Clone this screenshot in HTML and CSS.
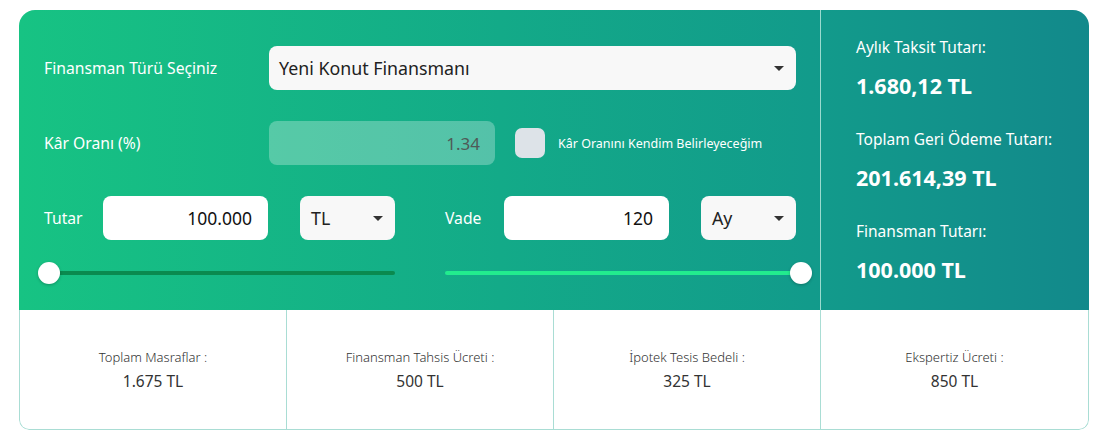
FILE: index.html
```html
<!DOCTYPE html>
<html lang="tr">
<head>
<meta charset="utf-8">
<title>Finansman Hesaplama</title>
<link rel="stylesheet" href="styles.css">
</head>
<body>
<div class="calc">
  <div class="top">
    <div class="form">
      <div class="row">
        <div class="label">Finansman Türü Seçiniz</div>
        <div class="select wide"><span>Yeni Konut Finansmanı</span><i class="caret"></i></div>
      </div>
      <div class="row">
        <div class="label">Kâr Oranı (%)</div>
        <div class="rate">1.34</div>
        <div class="check"></div>
        <div class="check-label">Kâr Oranını Kendim Belirleyeceğim</div>
      </div>
      <div class="pair">
        <div class="half">
          <div class="field">
            <div class="short-label">Tutar</div>
            <div class="input">100.000</div>
            <div class="select small"><span>TL</span><i class="caret"></i></div>
          </div>
          <div class="slider slider-left">
            <div class="track dark"></div>
            <div class="thumb thumb-left"></div>
          </div>
        </div>
        <div class="half">
          <div class="field">
            <div class="short-label">Vade</div>
            <div class="input">120</div>
            <div class="select small"><span>Ay</span><i class="caret"></i></div>
          </div>
          <div class="slider slider-right">
            <div class="track bright"></div>
            <div class="thumb thumb-right"></div>
          </div>
        </div>
      </div>
    </div>
    <div class="summary">
      <div class="sum-item">
        <div class="sum-label">Aylık Taksit Tutarı:</div>
        <div class="sum-value">1.680,12 TL</div>
      </div>
      <div class="sum-item">
        <div class="sum-label">Toplam Geri Ödeme Tutarı:</div>
        <div class="sum-value">201.614,39 TL</div>
      </div>
      <div class="sum-item">
        <div class="sum-label">Finansman Tutarı:</div>
        <div class="sum-value">100.000 TL</div>
      </div>
    </div>
  </div>
  <div class="costs">
    <div class="cost"><div class="cost-label">Toplam Masraflar :</div><div class="cost-value">1.675 TL</div></div>
    <div class="cost"><div class="cost-label">Finansman Tahsis Ücreti :</div><div class="cost-value">500 TL</div></div>
    <div class="cost"><div class="cost-label">İpotek Tesis Bedeli :</div><div class="cost-value">325 TL</div></div>
    <div class="cost"><div class="cost-label">Ekspertiz Ücreti :</div><div class="cost-value">850 TL</div></div>
  </div>
</div>
</body>
</html>
```
FILE: styles.css
```css
* { box-sizing: border-box; }
body {
  margin: 0;
  background: #fff;
  font-family: "Noto Sans", Roboto, Arial, sans-serif;
}
.calc {
  margin: 10px 0 0 19px;
  width: 1070px;
  border-radius: 16px 16px 10px 10px;
  overflow: hidden;
}
.top {
  display: grid;
  grid-template-columns: 801px 269px;
  height: 300px;
  background: linear-gradient(90deg, #17c383 0%, #13aa88 45%, #129b8b 74%, #12898b 100%);
}
.form {
  padding: 36px 24px 0 25px;
  color: #fff;
}
.row {
  display: flex;
  align-items: center;
  height: 44px;
  margin-bottom: 31px;
}
.label {
  width: 225px;
  font-size: 15.7px;
}
.select {
  display: flex;
  align-items: center;
  justify-content: space-between;
  height: 44px;
  background: #f8f8f8;
  border-radius: 8px;
  color: #222;
  font-size: 17.8px;
}
.wide { flex: 1; padding: 0 12px 0 10px; }
.small { width: 95px; padding: 0 12px 0 11px; }
.caret {
  width: 0;
  height: 0;
  border-left: 5px solid transparent;
  border-right: 5px solid transparent;
  border-top: 5px solid #333;
}
.rate {
  width: 226px;
  height: 44px;
  border-radius: 8px;
  background: rgba(255, 255, 255, 0.28);
  color: #4f5a57;
  font-size: 17px;
  display: flex;
  align-items: center;
  justify-content: flex-end;
  padding-right: 15px;
}
.check {
  width: 30px;
  height: 30px;
  border-radius: 7px;
  background: #dde3e8;
  margin-left: 20px;
}
.check-label {
  margin-left: 13px;
  font-size: 12.5px;
}
.pair {
  display: flex;
  gap: 50px;
}
.half {
  width: 351px;
}
.field {
  display: flex;
  align-items: center;
  height: 44px;
}
.short-label {
  width: 59px;
  font-size: 15.7px;
}
.input {
  width: 165px;
  height: 44px;
  margin-right: 32px;
  border-radius: 8px;
  background: #fff;
  color: #111;
  font-size: 17.5px;
  display: flex;
  align-items: center;
  justify-content: flex-end;
  padding-right: 16px;
}
.slider {
  position: relative;
  display: flex;
  align-items: center;
  height: 22px;
  margin-top: 22px;
}
.slider-left { margin-left: 5px; }
.slider-right { margin-right: -5px; }
.track {
  flex: 1;
  height: 4px;
  border-radius: 2px;
}
.dark { background: #0a8a4f; }
.bright { background: #22ec8e; }
.thumb {
  position: absolute;
  top: 0;
  width: 22px;
  height: 22px;
  border-radius: 50%;
  background: #fff;
  box-shadow: 0 1px 3px rgba(0, 0, 0, 0.25);
}
.thumb-left { left: -11px; }
.thumb-right { right: -11px; }
.summary {
  border-left: 1px solid rgba(200, 240, 230, 0.75);
  padding: 27px 0 0 35px;
  color: #fff;
  display: flex;
  flex-direction: column;
  gap: 30px;
}
.sum-label {
  font-size: 15.5px;
  line-height: 20px;
}
.sum-value {
  font-size: 21.5px;
  font-weight: 700;
  line-height: 26px;
  margin-top: 16px;
}
.costs {
  display: grid;
  grid-template-columns: repeat(4, 1fr);
  height: 120px;
  border: 1px solid #a9ddd4;
  border-top: none;
  border-radius: 0 0 10px 10px;
}
.cost {
  display: flex;
  flex-direction: column;
  align-items: center;
  justify-content: center;
  color: #333;
  border-right: 1px solid #a9ddd4;
  padding-top: 2px;
}
.cost:last-child { border-right: none; }
.cost-label {
  font-size: 13px;
  font-weight: 300;
  line-height: 18px;
}
.cost-value {
  font-size: 15.5px;
  line-height: 24px;
  margin-top: 3px;
}
```
